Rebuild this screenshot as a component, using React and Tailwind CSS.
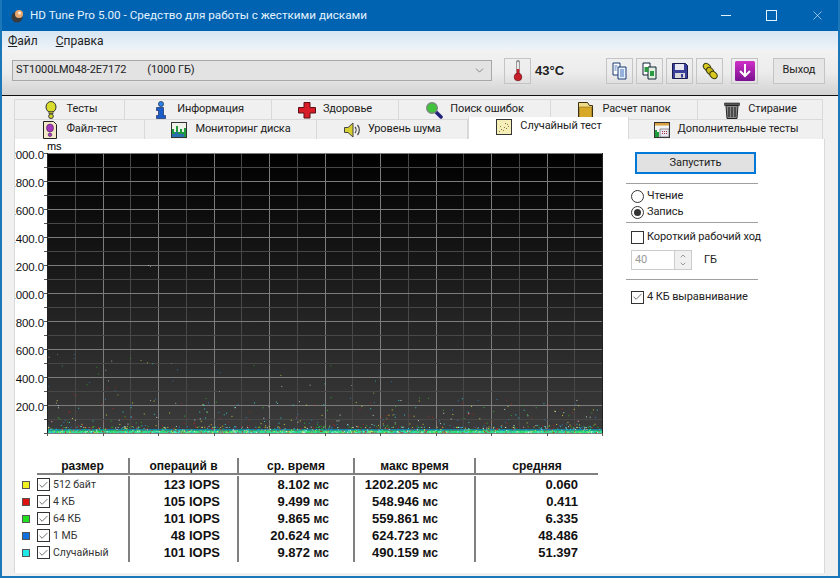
import { X, ChevronDown, ChevronUp, Check } from 'lucide-react';

const FONT = "font-['Roboto','Noto_Sans',sans-serif]";

// seeded noise so the scatter stays the same between runs
function makeRandom(seed) {
  let s = seed;
  return () => {
    s = (s * 16807) % 2147483647;
    return s / 2147483647;
  };
}

const POINT_COLORS = ['#e8e83a', '#d02020', '#22d022', '#2a8fe0', '#30e8e8', '#d8f8f0'];

function buildPoints() {
  const r = makeRandom(4242);
  const pts = [];
  // dense line along the floor
  for (let i = 0; i < 800; i++) {
    pts.push({ x: r() * 553, y: 279 - r() * r() * 6, c: POINT_COLORS[Math.floor(r() * 6)], o: 0.9 });
  }
  // thinner cloud above it
  for (let i = 0; i < 420; i++) {
    const d = r();
    pts.push({ x: r() * 553, y: 274 - d * d * d * 30, c: POINT_COLORS[Math.floor(r() * 6)], o: 0.8 });
  }
  // a few stragglers
  for (let i = 0; i < 40; i++) {
    pts.push({ x: r() * r() * 420, y: 250 - r() * 50, c: POINT_COLORS[Math.floor(r() * 6)], o: 0.6 });
  }
  pts.push(
    { x: 101, y: 112, c: '#bbbbbb', o: 0.8 },
    { x: 103, y: 113, c: '#999999', o: 0.7 },
    { x: 10, y: 201, c: '#999999', o: 0.5 },
    { x: 124, y: 210, c: '#999999', o: 0.5 },
    { x: 304, y: 232, c: '#aaaaaa', o: 0.6 },
    { x: 172, y: 238, c: '#aaaaaa', o: 0.6 },
  );
  return pts;
}

function Chart() {
  const left = 32;
  const top = 14;
  const w = 555;
  const h = 280;
  const pts = buildPoints();
  const yLabels = ['2000.0', '1800.0', '1600.0', '1400.0', '1200.0', '1000.0', '800.0', '600.0', '400.0', '200.0'];
  const xLabels = [0, 100, 200, 300, 400, 500, 600, 700, 800, 900];
  return (
    <svg width="610" height="298" viewBox="0 0 610 298" className="block">
      <defs>
        <linearGradient id="plotBg" x1="0" y1="0" x2="0" y2="1">
          <stop offset="0" stopColor="#000000" />
          <stop offset="1" stopColor="#3c3c3c" />
        </linearGradient>
      </defs>
      <rect x={left} y={top} width={w} height={h} fill="url(#plotBg)" />
      {Array.from({ length: 21 }).map((_, i) => {
        const x = Math.round(left + (w * i) / 20) + 0.5;
        const major = i % 2 === 0;
        return <line key={i} x1={x} x2={x} y1={top} y2={top + h} stroke={major ? '#7c7c7c' : '#484848'} />;
      })}
      {Array.from({ length: 21 }).map((_, i) => {
        const y = Math.round(top + (h * i) / 20) + 0.5;
        const major = i % 2 === 0;
        return <line key={i} x1={left} x2={left + w} y1={y} y2={y} stroke={major ? '#7c7c7c' : '#484848'} />;
      })}
      {/* ticks outside the plot */}
      {Array.from({ length: 21 }).map((_, i) => {
        const y = Math.round(top + (h * i) / 20) + 0.5;
        return <line key={i} x1={left - 3} x2={left} y1={y} y2={y} stroke="#555555" />;
      })}
      {Array.from({ length: 11 }).map((_, i) => {
        const x = Math.round(left + (w * i) / 10) + 0.5;
        return <line key={i} x1={x} x2={x} y1={top + h} y2={top + h + 3} stroke="#555555" />;
      })}
      <rect x={left} y={top + h - 4} width={w} height="1.5" fill="#167fa0" />
      <rect x={left} y={top + h - 2.5} width={w} height="2.5" fill="#2ee08c" />
      {pts.map((p, i) => (
        <rect key={i} x={left + p.x} y={top + p.y} width="1" height="1" fill={p.c} opacity={p.o} />
      ))}
      <line x1={left + 0.5} x2={left + 0.5} y1={top} y2={top + h} stroke="#222222" />
      <line x1={left + w + 0.5} x2={left + w + 0.5} y1={top} y2={top + h} stroke="#222222" />
      <text x={left} y="11" fontSize="11" fontFamily="Liberation Sans" fill="#000">ms</text>
      {yLabels.map((t, i) => (
        <text key={t} x={left - 3} y={top + (h * i) / 10 + 6} textAnchor="end" fontSize="11.5" fontFamily="Liberation Sans" fill="#111">{t}</text>
      ))}
      {xLabels.map((t, i) => (
        <text key={t} x={left + (w * i) / 10} y={top + h + 14} textAnchor="middle" fontSize="11.5" fontFamily="Liberation Sans" fill="#111">{t}</text>
      ))}
      <text x={left + w} y={top + h + 14} textAnchor="middle" fontSize="11.5" fontFamily="Liberation Sans" fill="#111">1000gB</text>
    </svg>
  );
}

function IconFrame({ children }) {
  return <svg width="18" height="18" viewBox="0 0 18 18" className="shrink-0">{children}</svg>;
}

const TabIcons = {
  tests: (
    <IconFrame>
      <ellipse cx="9" cy="6" rx="5" ry="5.5" fill="#d8dc2c" stroke="#333" />
      <rect x="7" y="10.5" width="4" height="2.2" fill="#b0b030" stroke="#333" strokeWidth="0.6" />
      <circle cx="9" cy="15.2" r="2.3" fill="#d8dc2c" stroke="#333" />
    </IconFrame>
  ),
  info: (
    <IconFrame>
      <circle cx="9" cy="3" r="2.6" fill="#2a80e8" stroke="#123" strokeWidth="0.6" />
      <path d="M4.5 6.5h7v8h2v3h-9v-3h2v-5h-2z" fill="#1a5cc8" stroke="#0a1a50" strokeWidth="0.6" />
    </IconFrame>
  ),
  health: (
    <IconFrame>
      <path d="M6 1.5h6v5h5.5v5.5H12v5H6v-5H.5V6.5H6z" fill="#d81c28" stroke="#5a1014" />
    </IconFrame>
  ),
  search: (
    <IconFrame>
      <path d="M10.5 10.5l5.5 5.5" stroke="#20207a" strokeWidth="3.5" strokeLinecap="round" />
      <circle cx="7" cy="7" r="5.3" fill="#3fc43c" stroke="#7a8a7a" strokeWidth="1.4" />
    </IconFrame>
  ),
  folder: (
    <IconFrame>
      <path d="M1.5 1.5h9l2 3h3v13h-14z" fill="#f0dc88" stroke="#3a3010" />
      <path d="M2.5 6h12v10.5h-12z" fill="#d8a828" stroke="#8a6a14" strokeWidth="0.6" />
    </IconFrame>
  ),
  trash: (
    <IconFrame>
      <path d="M1.5 2h15v2.5h-15z" fill="#555" stroke="#222" strokeWidth="0.6" />
      <path d="M3 4.5h12l-1 13H4z" fill="#8a8a8a" stroke="#222" />
      <path d="M6 6v10M9 6v10M12 6v10" stroke="#222" strokeWidth="1.2" />
    </IconFrame>
  ),
  file: (
    <IconFrame>
      <path d="M2.5 .5h10l3 3v14h-13z" fill="#f4e8c8" stroke="#222" />
      <ellipse cx="9" cy="7" rx="3.5" ry="4" fill="#a838c0" stroke="#402050" strokeWidth="0.6" />
      <circle cx="9" cy="13.8" r="1.8" fill="#a838c0" stroke="#402050" strokeWidth="0.6" />
    </IconFrame>
  ),
  monitor: (
    <IconFrame>
      <rect x="1.5" y="1.5" width="15" height="15" fill="#eef2e8" stroke="#333" />
      <path d="M2 16V8h2v3h2V5h2v6h2V8h2v3h2V7h2v9z" fill="#1f9a3a" />
      <path d="M2 16v-3h3v-2h3v2h6v3z" fill="#2a70b0" />
    </IconFrame>
  ),
  noise: (
    <IconFrame>
      <path d="M1.5 6.5h3.5l5-4.5v14l-5-4.5H1.5z" fill="#d8d030" stroke="#444" />
      <path d="M12 6c1.4 1.6 1.4 4.4 0 6M14.5 4c2.4 2.8 2.4 7.2 0 10" fill="none" stroke="#444" strokeWidth="1.2" />
    </IconFrame>
  ),
  random: (
    <IconFrame>
      <rect x="1.5" y="1.5" width="15" height="15" fill="#f6eeb8" stroke="#333" />
      <path d="M4 13h1v1H4zM6 11h1v1H6zM8 12h1v1H8zM9 9h1v1H9zM11 10h1v1h-1zM12 6h1v1h-1zM13 8h1v1h-1zM10 5h1v1h-1zM5 8h1v1H5z" fill="#8a7a40" />
    </IconFrame>
  ),
  extra: (
    <IconFrame>
      <rect x="1.5" y="1.5" width="15" height="15" fill="#f4f4f4" stroke="#333" />
      <path d="M2 2h14v2.5H2z" fill="#d8a040" />
      <path d="M2 16V9h2v2h2v5z" fill="#1f9a3a" />
      <path d="M7 8h9v8H7z" fill="#e8e8f4" stroke="#555" strokeWidth="0.6" />
      <path d="M9 10h1v1H9zM11 10h1v1h-1zM13 10h1v1h-1zM9 12h1v1H9zM11 12h1v1h-1zM13 12h1v1h-1z" fill="#a03030" />
    </IconFrame>
  ),
};

const ROW_ONE = [
  { label: 'Тесты', icon: 'tests', w: 'w-[111px]' },
  { label: 'Информация', icon: 'info', w: 'w-[147px]' },
  { label: 'Здоровье', icon: 'health', w: 'w-[127px]' },
  { label: 'Поиск ошибок', icon: 'search', w: 'w-[152px]' },
  { label: 'Расчет папок', icon: 'folder', w: 'w-[147px]' },
  { label: 'Стирание', icon: 'trash', w: 'w-[125px]' },
];

const ROW_TWO = [
  { label: 'Файл-тест', icon: 'file', w: 'w-[131px]' },
  { label: 'Мониторинг диска', icon: 'monitor', w: 'w-[172px]' },
  { label: 'Уровень шума', icon: 'noise', w: 'w-[151px]' },
  { label: 'Случайный тест', icon: 'random', w: 'w-[161px]', active: true },
  { label: 'Дополнительные тесты', icon: 'extra', w: 'w-[194px]' },
];

function Tab({ tab }) {
  if (tab.active) {
    return (
      <div className={`${tab.w} h-[22px] -mt-[2px] bg-white border-x border-[#d9d9d9] flex items-center justify-center gap-[7px] pb-[3px] z-10`}>
        {TabIcons[tab.icon]}
        <span>{tab.label}</span>
      </div>
    );
  }
  return (
    <div className={`${tab.w} h-5 bg-[#f0f0f0] border-r border-t border-[#d9d9d9] first:border-l flex items-center justify-center gap-[7px]`}>
      {TabIcons[tab.icon]}
      <span>{tab.label}</span>
    </div>
  );
}

function ToolButton({ children, className = '' }) {
  return (
    <div className={`w-[27px] h-[26px] border border-[#c4c4c4] flex items-center justify-center ${className}`}>
      {children}
    </div>
  );
}

function Check13({ checked }) {
  return (
    <span className="w-[13px] h-[13px] border border-[#333] bg-white flex items-center justify-center shrink-0">
      {checked && <Check size={12} strokeWidth={1.4} color="#222" />}
    </span>
  );
}

function Radio({ on }) {
  return (
    <span className="w-[13px] h-[13px] rounded-full border border-[#333] bg-white flex items-center justify-center shrink-0">
      {on && <span className="w-[7px] h-[7px] rounded-full bg-[#333]" />}
    </span>
  );
}

const ROWS = [
  { color: 'bg-[#f0f020]', name: '512 байт', iops: '123 IOPS', avg: '8.102', max: '1202.205', mid: '0.060' },
  { color: 'bg-[#e01010]', name: '4 КБ', iops: '105 IOPS', avg: '9.499', max: '548.946', mid: '0.411' },
  { color: 'bg-[#20e020]', name: '64 КБ', iops: '101 IOPS', avg: '9.865', max: '559.861', mid: '6.335' },
  { color: 'bg-[#1070e0]', name: '1 МБ', iops: '48 IOPS', avg: '20.624', max: '624.723', mid: '48.486' },
  { color: 'bg-[#20e8e8]', name: 'Случайный', iops: '101 IOPS', avg: '9.872', max: '490.159', mid: '51.397' },
];

function Ms({ value }) {
  return (
    <>
      {value} <span className="text-[12px]">мс</span>
    </>
  );
}

function ResultsTable() {
  const head = 'h-[15px] flex items-center justify-center text-[12px] font-bold';
  const colLine = 'border-l-2 border-[#808080]';
  return (
    <div className="flex pl-[7px] font-['Liberation_Sans',sans-serif] text-[#111] tracking-normal">
      <div className="w-[15px] pt-[18px] flex flex-col">
        {ROWS.map((row) => (
          <div key={row.name} className="h-[17px] flex items-center">
            <span className={`w-[8px] h-[8px] border border-[#555] ${row.color}`} />
          </div>
        ))}
      </div>
      <div className="w-[561px] flex flex-col h-[104px]">
        <div className="flex h-[15px] border-b-2 border-[#808080] box-content">
          <div className={`${head} w-[91px]`}>размер</div>
          <div className={`${head} w-[109px] ${colLine}`}>операций в</div>
          <div className={`${head} w-[116px] ${colLine}`}>ср. время</div>
          <div className={`${head} w-[121px] ${colLine}`}>макс время</div>
          <div className={`${head} flex-1 ${colLine}`}>средняя</div>
        </div>
        <div className="flex flex-1 pt-px">
          <div className="w-[91px]">
            {ROWS.map((row) => (
              <div key={row.name} className="h-[17px] flex items-center gap-[3px] font-['Roboto',sans-serif] text-[10.5px]">
                <Check13 checked />
                <span className="text-[#333]">{row.name}</span>
              </div>
            ))}
          </div>
          <div className={`w-[109px] ${colLine} pr-[17px]`}>
            {ROWS.map((row) => (
              <div key={row.name} className="h-[17px] flex items-center justify-end text-[13px] font-bold">{row.iops}</div>
            ))}
          </div>
          <div className={`w-[116px] ${colLine} pr-[24px]`}>
            {ROWS.map((row) => (
              <div key={row.name} className="h-[17px] flex items-center justify-end text-[13px] font-bold whitespace-pre"><Ms value={row.avg} /></div>
            ))}
          </div>
          <div className={`w-[121px] ${colLine} pr-[36px]`}>
            {ROWS.map((row) => (
              <div key={row.name} className="h-[17px] flex items-center justify-end text-[13px] font-bold whitespace-pre"><Ms value={row.max} /></div>
            ))}
          </div>
          <div className={`flex-1 ${colLine} pr-[20px]`}>
            {ROWS.map((row) => (
              <div key={row.name} className="h-[17px] flex items-center justify-end text-[13px] font-bold">{row.mid}</div>
            ))}
          </div>
        </div>
      </div>
    </div>
  );
}

function SidePanel() {
  return (
    <div className="w-[132px] pt-[13px] flex flex-col text-[#222]">
      <div className="ml-[9px] w-[121px] h-[22px] border-2 border-[#0078d7] bg-[#e1e1e1] flex items-center justify-center">Запустить</div>
      <div className="h-px bg-[#a0a0a0] mt-[9px]" />
      <div className="flex items-center gap-[3px] pl-[5px] mt-[4px] h-[16px]"><Radio /><span>Чтение</span></div>
      <div className="flex items-center gap-[3px] pl-[5px] h-[16px]"><Radio on /><span>Запись</span></div>
      <div className="h-px bg-[#a0a0a0] mt-[2px]" />
      <div className="flex items-center gap-[3px] pl-[5px] mt-[6px] h-[16px] whitespace-nowrap"><Check13 /><span>Короткий рабочий ход</span></div>
      <div className="flex items-center mt-[5px] pl-[5px]">
        <div className="w-[61px] h-[20px] border border-[#cccccc] flex items-center justify-between pl-[3px] text-[#9a9a9a]">
          <span>40</span>
          <div className="w-[17px] h-[18px] bg-[#f0f0f0] border-l border-[#cccccc] flex flex-col items-center justify-center">
            <ChevronUp size={8} strokeWidth={2.5} color="#888" />
            <ChevronDown size={8} strokeWidth={2.5} color="#888" />
          </div>
        </div>
        <span className="ml-[12px]">ГБ</span>
      </div>
      <div className="h-px bg-[#a0a0a0] mt-[9px]" />
      <div className="flex items-center gap-[3px] pl-[5px] mt-[9px] h-[16px] whitespace-nowrap"><Check13 checked /><span>4 КБ выравнивание</span></div>
    </div>
  );
}

export default function App() {
  return (
    <div className={`w-[840px] h-[578px] overflow-hidden flex flex-col bg-[#f0f0f0] text-[11px] tracking-[-0.1px] text-[#222] border-x-2 border-b-2 border-[#1a78b8] ${FONT}`}>
      {/* Title bar */}
      <div className="h-[31px] -mx-[2px] bg-[#0063b1] flex items-center shrink-0 tracking-normal">
        <svg width="16" height="16" viewBox="0 0 16 16" className="ml-[10px]">
          <circle cx="7" cy="9" r="5.5" fill="#3a3a3a" />
          <circle cx="9" cy="6" r="4" fill="#e8a870" />
          <circle cx="9.5" cy="5" r="1.5" fill="#fff0d8" />
        </svg>
        <span className="ml-[4px] text-[11.7px] text-[#e4f2ff] whitespace-nowrap">HD Tune Pro 5.00 - Средство для работы с жесткими дисками</span>
        <div className="ml-auto flex items-center">
          <span className="w-[10px] h-px bg-[#e4f2ff] mr-[35px]" />
          <span className="w-[11px] h-[11px] border border-[#e4f2ff] mr-[33px]" />
          <X size={15} strokeWidth={1} color="#e4f2ff" className="mr-[15px]" />
        </div>
      </div>
      {/* Menu */}
      <div className="h-[19px] bg-gradient-to-b from-[#d6e6f3] to-[#eef3f8] flex items-center gap-[18px] pl-[6px] shrink-0 text-[#222] text-[12px] tracking-normal">
        <span><u>Ф</u>айл</span>
        <span><u>С</u>правка</span>
      </div>
      {/* Toolbar */}
      <div className="h-[46px] bg-gradient-to-b from-[#f2f2f2] via-[#ececec] to-[#d2d2d2] border-b-[1.5px] border-[#111] flex items-center pl-[10px] shrink-0 pb-[4px]">
        <div className="w-[480px] h-[21px] border border-[#a8a8a8] bg-[#e3e3e3] flex items-center justify-between pl-[3px] pr-[5px]">
          <span className="whitespace-pre">ST1000LM048-2E7172        (1000 ГБ)</span>
          <ChevronDown size={13} strokeWidth={1.2} color="#555" />
        </div>
        <ToolButton className="ml-[12px]">
          <svg width="20" height="22" viewBox="0 0 20 22">
            <path d="M10 2v14" stroke="#888" strokeWidth="4" strokeLinecap="round" />
            <path d="M10 3v12" stroke="#e8e8e8" strokeWidth="2.4" strokeLinecap="round" />
            <path d="M10 9v7" stroke="#c81e28" strokeWidth="2.6" />
            <circle cx="10" cy="17" r="3.8" fill="#c81e28" stroke="#701018" strokeWidth="0.7" />
          </svg>
        </ToolButton>
        <span className="ml-[4px] font-bold text-[13px] text-[#222] w-[71px] tracking-normal font-['Liberation_Sans',sans-serif]">43°C</span>
        <ToolButton>
          <svg width="18" height="18" viewBox="0 0 18 18">
            <path d="M2 1h7v12H2z" fill="#fff" stroke="#1a3a70" />
            <path d="M7 5h8v12H7z" fill="#e8f2ff" stroke="#1a3a70" />
            <path d="M9 8h4M9 10h4M9 12h4M9 14h4M3.5 4h3M3.5 6h2M3.5 8h2" stroke="#3060b0" strokeWidth="0.9" />
          </svg>
        </ToolButton>
        <ToolButton className="ml-[3px]">
          <svg width="18" height="18" viewBox="0 0 18 18">
            <path d="M2 1h7v12H2z" fill="#fff" stroke="#123" />
            <path d="M7 5h8v12H7z" fill="#dff0e0" stroke="#123" />
            <path d="M3.5 5h4v5h-4z" fill="#2a9a40" />
            <path d="M9 9h4v5H9z" fill="#2a9a40" />
          </svg>
        </ToolButton>
        <ToolButton className="ml-[3px]">
          <svg width="18" height="18" viewBox="0 0 18 18">
            <path d="M1.5 1.5h13l2 2v13h-15z" fill="#3a3f9a" stroke="#181a50" />
            <rect x="4" y="2" width="9" height="6" fill="#e8e8f0" />
            <rect x="4" y="11" width="10" height="5" fill="#d8d8d8" />
            <rect x="10" y="12" width="2" height="3.5" fill="#3a3f9a" />
          </svg>
        </ToolButton>
        <ToolButton className="ml-[3px]">
          <svg width="18" height="18" viewBox="0 0 18 18">
            <ellipse cx="6" cy="5" rx="4" ry="3" transform="rotate(40 6 5)" fill="#d8c820" stroke="#3a3a10" />
            <ellipse cx="9" cy="9" rx="4" ry="3" transform="rotate(40 9 9)" fill="#c8b818" stroke="#3a3a10" />
            <ellipse cx="12.5" cy="13" rx="4" ry="3" transform="rotate(40 12.5 13)" fill="#d8c820" stroke="#3a3a10" />
          </svg>
        </ToolButton>
        <ToolButton className="ml-[8px]">
          <svg width="22" height="22" viewBox="0 0 22 22">
            <defs>
              <linearGradient id="dl" x1="0" y1="0" x2="0" y2="1">
                <stop offset="0" stopColor="#d030c8" />
                <stop offset="1" stopColor="#7a1090" />
              </linearGradient>
            </defs>
            <rect x="1" y="1" width="20" height="20" rx="1.5" fill="url(#dl)" />
            <path d="M11 4v12M6 11l5 5 5-5" fill="none" stroke="#fff" strokeWidth="2" />
          </svg>
        </ToolButton>
        <div className="ml-[15px] w-[52px] h-[26px] border border-[#c4c4c4] bg-[#e6e6e6] flex items-center justify-center text-[#222]">Выход</div>
      </div>
      {/* Tabs */}
      <div className="flex-1 flex flex-col pl-[12px] pr-[13px] pt-[3px] min-h-0">
        <div className="flex">
          {ROW_ONE.map((tab) => <Tab key={tab.label} tab={tab} />)}
        </div>
        <div className="flex">
          {ROW_TWO.map((tab) => <Tab key={tab.label} tab={tab} />)}
        </div>
        {/* Panel */}
        <div className="flex-1 bg-white border-x border-[#d9d9d9] flex min-h-0 mb-[3px]">
          <div className="w-[611px] flex flex-col overflow-hidden">
            <Chart />
            <div className="mt-[21px]">
              <ResultsTable />
            </div>
          </div>
          <SidePanel />
        </div>
      </div>
    </div>
  );
}
